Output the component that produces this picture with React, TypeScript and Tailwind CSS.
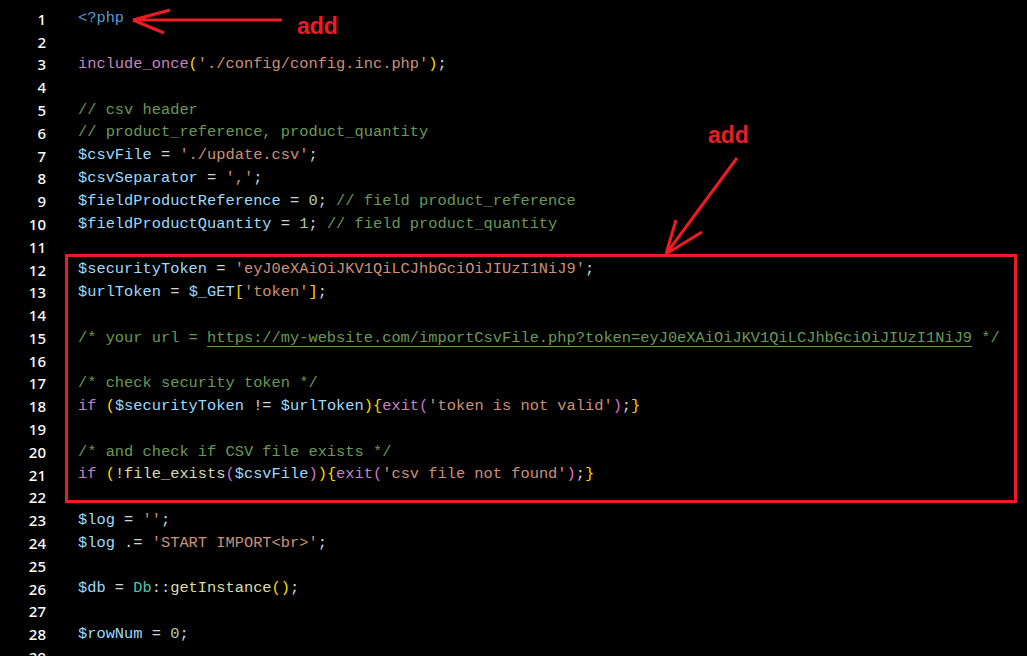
import React from "react";

type Tok = [string, string];

const V = "text-[#9cdcfe]";
const S = "text-[#ce9178]";
const C = "text-[#6a9955]";
const P = "text-[#d4d4d4]";
const K = "text-[#c586c0]";
const N = "text-[#b5cea8]";
const F = "text-[#dcdcaa]";
const Y = "text-[#ffd700]";
const M = "text-[#da70d6]";

const lines: Tok[][] = [
  [["<?php", "text-[#569cd6]"]],
  [],
  [["include_once", K], ["(", Y], ["'./config/config.inc.php'", S], [")", Y], [";", P]],
  [],
  [["// csv header", C]],
  [["// product_reference, product_quantity", C]],
  [["$csvFile", V], [" = ", P], ["'./update.csv'", S], [";", P]],
  [["$csvSeparator", V], [" = ", P], ["','", S], [";", P]],
  [["$fieldProductReference", V], [" = ", P], ["0", N], ["; ", P], ["// field product_reference", C]],
  [["$fieldProductQuantity", V], [" = ", P], ["1", N], ["; ", P], ["// field product_quantity", C]],
  [],
  [["$securityToken", V], [" = ", P], ["'eyJ0eXAiOiJKV1QiLCJhbGciOiJIUzI1NiJ9'", S], [";", P]],
  [["$urlToken", V], [" = ", P], ["$_GET", V], ["[", Y], ["'token'", S], ["]", Y], [";", P]],
  [],
  [
    ["/* your url = ", C],
    ["https://my-website.com/importCsvFile.php?token=eyJ0eXAiOiJKV1QiLCJhbGciOiJIUzI1NiJ9", C + " underline underline-offset-[4px]"],
    [" */", C],
  ],
  [],
  [["/* check security token */", C]],
  [
    ["if", K], [" ", P], ["(", Y], ["$securityToken", V], [" != ", P], ["$urlToken", V], [")", Y], ["{", Y],
    ["exit", K], ["(", M], ["'token is not valid'", S], [")", M], [";", P], ["}", Y],
  ],
  [],
  [["/* and check if CSV file exists */", C]],
  [
    ["if", K], [" ", P], ["(", Y], ["!", P], ["file_exists", F], ["(", M], ["$csvFile", V], [")", M], [")", Y], ["{", Y],
    ["exit", K], ["(", M], ["'csv file not found'", S], [")", M], [";", P], ["}", Y],
  ],
  [],
  [["$log", V], [" = ", P], ["''", S], [";", P]],
  [["$log", V], [" .= ", P], ["'START IMPORT<br>'", S], [";", P]],
  [],
  [["$db", V], [" = ", P], ["Db", "text-[#4ec9b0]"], ["::", P], ["getInstance", F], ["(", Y], [")", Y], [";", P]],
  [],
  [["$rowNum", V], [" = ", P], ["0", N], [";", P]],
  [],
];

export default function App() {
  return (
    <div className="relative h-[656px] w-[1027px] overflow-hidden bg-black pt-[7.6px]">
      {lines.map((toks, i) => (
        <div key={i} className="flex h-[22.8px] items-center">
          <span className="w-[46px] shrink-0 text-right font-['Noto_Sans',sans-serif] text-[15px] font-medium text-white">
            {i + 1}
          </span>
          <span className="ml-[32px] whitespace-pre font-['Liberation_Mono',monospace] text-[15.37px]">
            {toks.map(([t, c], j) => (
              <span key={j} className={c}>
                {t}
              </span>
            ))}
          </span>
        </div>
      ))}

      {/* annotations */}
      <div className="pointer-events-none absolute top-[254px] left-[65px] h-[249px] w-[952px] border-[3px] border-[#ed1c24]" />
      <svg
        className="pointer-events-none absolute inset-0"
        width={1027}
        height={656}
        fill="none"
        stroke="#ed1c24"
        strokeWidth={3}
      >
        <path d="M282 20H133M133 20L170 10M133 20L164 33" />
        <path d="M737 158L666 254M666 254L676 220M666 254L702 232" />
      </svg>
      <span className="absolute top-[9px] left-[297px] font-['Liberation_Sans',sans-serif] text-[23px] font-bold text-[#ed1c24]">
        add
      </span>
      <span className="absolute top-[118px] left-[708px] font-['Liberation_Sans',sans-serif] text-[23px] font-bold text-[#ed1c24]">
        add
      </span>
    </div>
  );
}
